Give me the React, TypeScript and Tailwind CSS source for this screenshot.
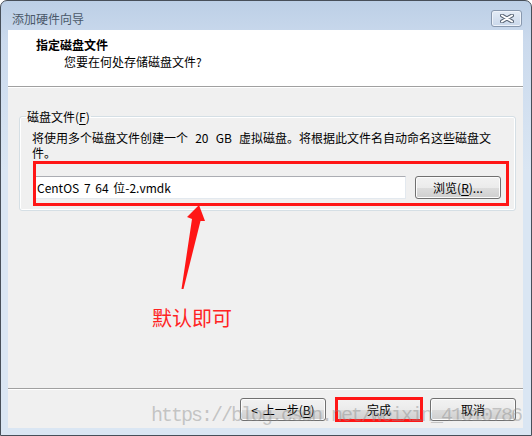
const btn =
  "flex h-[23px] w-[86px] items-center justify-center rounded-[3px] border border-[#707070] bg-[linear-gradient(to_bottom,#f2f2f2_0%,#ebebeb_50%,#dddddd_50%,#cfcfcf_100%)] shadow-[inset_0_0_0_1px_#fcfcfc] text-[12px] leading-none text-black"

export default function App() {
  return (
    <div className="relative h-[436px] w-[532px] bg-white font-['Noto_Sans_CJK_SC',sans-serif] text-[12px] text-black">
      <div className="flex h-full w-full flex-col rounded-t-[7px] border border-[#474f59] bg-[linear-gradient(to_bottom,#bccfe6_0px,#cbdaed_40px,#dae6f3_170px)]">
        {/* title bar */}
        <div className="flex h-[29px] items-start">
          <span className="ml-[11px] mt-[10px] leading-[16px] text-[#4a5869]">添加硬件向导</span>
          <div className="ml-auto mr-[9px] mt-[9px] flex h-[17px] w-[31px] items-center justify-center rounded-[3px] border border-[#8898ae] bg-[linear-gradient(to_bottom,#e4ecf6,#c9d7ea)] shadow-[inset_0_0_0_1px_#eef3fa]">
            <svg width="14" height="9" viewBox="0 0 14 9">
              <path d="M2 1.5 L12 7.5 M12 1.5 L2 7.5" stroke="#5a6677" strokeWidth="4" strokeLinecap="round" />
              <path d="M2 1.5 L12 7.5 M12 1.5 L2 7.5" stroke="#ffffff" strokeWidth="2" strokeLinecap="round" />
            </svg>
          </div>
        </div>

        {/* client */}
        <div className="ml-[7px] mr-[8px] mb-[7px] flex flex-1 flex-col bg-[#f0f0f0]">
          <div className="h-[56px] bg-white pl-[28px] pt-[7px]">
            <div className="font-bold leading-[16px]">指定磁盘文件</div>
            <div className="ml-[28px] mt-[1px] leading-[16px]">您要在何处存储磁盘文件?</div>
          </div>
          <div className="h-px bg-[#a0a0a0]" />
          <div className="h-px bg-white" />

          <div className="relative flex-1">
            <fieldset className="ml-[11px] mr-[10px] mt-[20px] rounded-[3px] border border-[#d5dfe5] pb-[11px] pl-[6px] pr-[13px] shadow-[inset_0_0_0_1px_#ffffff]">
              <legend className="px-[1px] leading-[17px]">
                磁盘文件(<span className="underline underline-offset-2">F</span>)
              </legend>
              <p className="ml-[6px] mt-[5px] w-[470px] leading-[15px] [word-spacing:4.5px]">
                将使用多个磁盘文件创建一个 20 GB 虚拟磁盘。将根据此文件名自动命名这些磁盘文件。
              </p>
              <div className="relative ml-[8px] mt-[16px] flex items-center gap-[9px]">
                <div className="flex h-[23px] w-[372px] items-center border border-[#e3e9ef] border-t-[#abadb3] bg-white pl-[2px] leading-none [word-spacing:2px]">
                  CentOS 7 64 位-2.vmdk
                </div>
                <div className={btn + " w-[84px] h-[22px]"}>
                  浏览(<span className="underline underline-offset-2">R</span>)...
                </div>
                <div className="pointer-events-none absolute -bottom-[7px] -left-[1px] -right-[7px] -top-[15px] border-[3px] border-[#ff1616]" />
              </div>
            </fieldset>

            <svg className="absolute left-[170px] top-[112px]" width="32" height="95" viewBox="0 0 32 95">
              <polygon points="21,5 27,21 22.5,21 5.5,89 3.5,89 14,19 9,17" fill="#ff1616" />
            </svg>
            <div className="absolute left-[144px] top-[220px] text-[20px] leading-[20px] text-[#ff2323]">默认即可</div>
          </div>

          <div className="h-px bg-[#a0a0a0]" />
          <div className="h-px bg-white" />
          <div className="flex h-[38px] items-start justify-end pr-[7px] pt-[8px]">
            <div className={btn + " [word-spacing:2px]"}>
              &lt; 上一步(<span className="underline underline-offset-2">B</span>)
            </div>
            <div className="relative ml-[10px]">
              <div className={btn + " border-[#3c7fb1] bg-[linear-gradient(to_bottom,#eaf6fd_0%,#d9f0fc_50%,#bee6fd_50%,#a7d9f5_100%)]"}>完成</div>
              <div className="pointer-events-none absolute -inset-[1px] border-[3px] border-[#ff1616]" />
            </div>
            <div className={btn + " ml-[8px]"}>取消</div>
          </div>
        </div>
      </div>

      <div className="pointer-events-none absolute left-[151px] top-[405px] whitespace-nowrap font-['Liberation_Mono',monospace] text-[20px] leading-[22px] tracking-[-2px] text-[#8c8c8c]/45">
        https://blog.csdn.net/weixin_41010786
      </div>
    </div>
  )
}
